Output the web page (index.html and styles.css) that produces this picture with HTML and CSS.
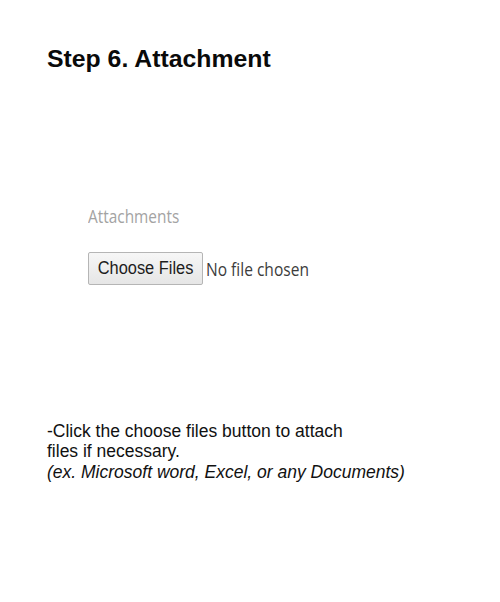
FILE: index.html
```html
<!DOCTYPE html>
<html>
<head>
<meta charset="utf-8">
<link rel="stylesheet" href="styles.css">
</head>
<body>
<div class="page">
  <h1 class="title">Step 6. Attachment</h1>
  <div class="form">
    <div class="label">Attachments</div>
    <div class="file-row">
      <span class="btn"><span class="btn-text">Choose Files</span></span>
      <span class="status">No file chosen</span>
    </div>
  </div>
  <div class="note">
    <div>-Click the choose files button to attach</div>
    <div>files if necessary.</div>
    <div class="ex">(ex. Microsoft word, Excel, or any Documents)</div>
  </div>
</div>
</body>
</html>
```
FILE: styles.css
```css
html, body {
  margin: 0;
  padding: 0;
  background: #ffffff;
}
.page {
  width: 500px;
  height: 602px;
  padding: 45px 0 0 47px;
  box-sizing: border-box;
  font-family: "Liberation Sans", Arial, sans-serif;
  color: #111111;
}
.title {
  margin: 0;
  font-size: 24.8px;
  line-height: 28px;
  font-weight: bold;
  color: #0a0a0a;
}
.form {
  margin: 131px 0 0 41px;
  font-family: "Open Sans", sans-serif;
}
.label {
  font-size: 17.5px;
  line-height: 24px;
  color: #a3a3a3;
  transform: scaleX(0.88);
  transform-origin: left center;
}
.file-row {
  display: flex;
  align-items: center;
  margin-top: 24px;
}
.btn {
  box-sizing: border-box;
  width: 115px;
  height: 33px;
  border: 1px solid #b5b5b5;
  border-radius: 2px;
  background: linear-gradient(#f6f6f6, #e6e6e6);
  display: flex;
  align-items: center;
  justify-content: center;
}
.btn-text {
  font-family: "Liberation Sans", Arial, sans-serif;
  font-size: 18px;
  color: #1d1d1d;
  display: inline-block;
  transform: scaleX(0.91);
  white-space: nowrap;
}
.status {
  margin-left: 3px;
  font-size: 18.5px;
  color: #3c3c3c;
  transform: scaleX(0.84);
  transform-origin: left center;
  white-space: nowrap;
}
.note {
  margin-top: 136px;
  font-size: 17.5px;
  line-height: 20.4px;
  color: #111111;
}
.ex {
  font-style: italic;
}
```
